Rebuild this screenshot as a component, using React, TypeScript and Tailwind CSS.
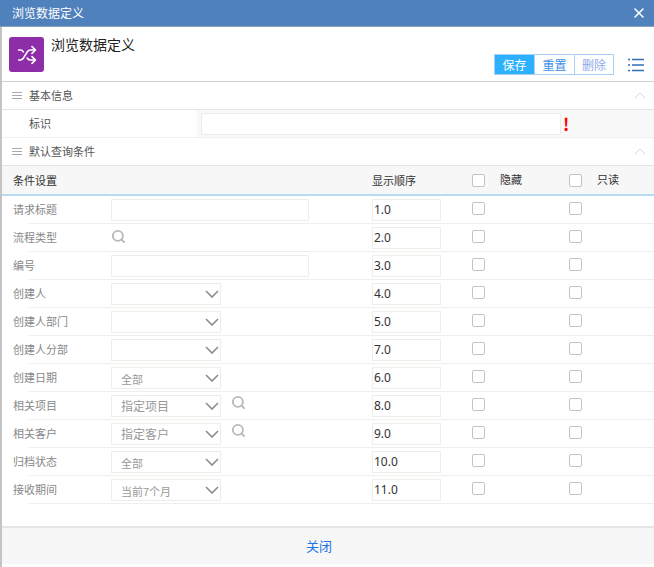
import { Search, Shuffle, X } from 'lucide-react'

type Row = {
  label: string
  order: string
  kind: 'input' | 'search' | 'select'
  value?: string
  lookup?: boolean
}

const ROWS: Row[] = [
  { label: '请求标题', order: '1.0', kind: 'input' },
  { label: '流程类型', order: '2.0', kind: 'search' },
  { label: '编号', order: '3.0', kind: 'input' },
  { label: '创建人', order: '4.0', kind: 'select' },
  { label: '创建人部门', order: '5.0', kind: 'select' },
  { label: '创建人分部', order: '7.0', kind: 'select' },
  { label: '创建日期', order: '6.0', kind: 'select', value: '全部' },
  { label: '相关项目', order: '8.0', kind: 'select', value: '指定项目', lookup: true },
  { label: '相关客户', order: '9.0', kind: 'select', value: '指定客户', lookup: true },
  { label: '归档状态', order: '10.0', kind: 'select', value: '全部' },
  { label: '接收期间', order: '11.0', kind: 'select', value: '当前7个月' },
]

function Lookup() {
  return <Search className="h-[15px] w-[15px] text-[#b8b8b8]" strokeWidth={3} />
}

function Check() {
  return (
    <input
      type="checkbox"
      className="block h-[13px] w-[13px] appearance-none rounded-[2px] border border-[#c4c4c4] bg-white"
    />
  )
}

function SelectBox({ value, lookup }: { value?: string; lookup?: boolean }) {
  return (
    <div className="flex h-[22px] w-[110px] items-center justify-between border border-[#eeeee8] pr-[1px] pl-[9px] text-[#999]">
      <span className={lookup ? 'text-[12px]' : 'pt-[2px]'}>{value}</span>
      <svg width="14" height="8" viewBox="0 0 14 8" fill="none" stroke="#8a8a8a" strokeWidth="1.6">
        <path d="M1 1l6 6 6-6" />
      </svg>
    </div>
  )
}

function SectionBar({ title }: { title: string }) {
  return (
    <div className="flex h-[28px] items-center justify-between border-b border-[#e4e4e4] pr-[8px] pl-[10px] text-[#555]">
      <div className="flex items-center gap-[7px]">
        <div className="flex w-[10px] flex-col gap-[2px]">
          <div className="h-px bg-[#aaa]" />
          <div className="h-px bg-[#aaa]" />
          <div className="h-px bg-[#aaa]" />
        </div>
        <span className="-mt-[1px]">{title}</span>
      </div>
      <svg width="12" height="7" viewBox="0 0 12 7" fill="none" stroke="#d8d8d8" strokeWidth="1">
        <path d="M1 6l5-5 5 5" />
      </svg>
    </div>
  )
}

export default function App() {
  return (
    <div className="flex h-[567px] w-[654px] flex-col bg-white font-['Noto_Sans_CJK_SC','Noto_Sans',sans-serif] text-[11px]">
      <div className="flex h-[27px] shrink-0 items-center justify-between border-b border-[#8da2b8] bg-[#4f81bd] pr-[7px] pl-[12px] text-[12px] text-white">
        <span>浏览数据定义</span>
        <X className="h-[16px] w-[16px]" strokeWidth={2.4} />
      </div>

      <div className="flex min-h-0 flex-1 flex-col border-l-2 border-[#c4c4c4]">
        <div className="flex h-[55px] shrink-0 border-b border-[#d0d0d0] pl-[7px]">
          <div className="mt-[10px] flex h-[35px] w-[35px] items-center justify-center rounded-[3px] bg-[#8e2da8] text-white">
            <Shuffle className="h-[20px] w-[20px]" strokeWidth={2} />
          </div>
          <div className="mt-[7px] ml-[7px] text-[14px] text-[#222]">浏览数据定义</div>
          <div className="mt-[27px] ml-auto flex h-[21px] border border-[#a8d0f5] text-[12px] text-[#3b8fe8]">
            <div className="flex w-[39px] items-center justify-center bg-[#2db1ff] text-white">保存</div>
            <div className="flex w-[40px] items-center justify-center border-l border-[#a8d0f5]">重置</div>
            <div className="flex w-[39px] items-center justify-center border-l border-[#a8d0f5] text-[#8fa9e8]">删除</div>
          </div>
          <svg
            className="mt-[31px] mr-[10px] ml-[14px]"
            width="16"
            height="14"
            viewBox="0 0 16 14"
            fill="none"
            stroke="#2f6fb5"
            strokeWidth="1.6"
          >
            <path d="M0 1.5h2M4 1.5h12M0 7h2M4 7h12M0 12.5h2M4 12.5h12" />
          </svg>
        </div>

        <SectionBar title="基本信息" />
        <div className="flex h-[28px] shrink-0 border-b border-[#f0f0f0]">
          <div className="flex w-[195px] items-center bg-white pb-[1px] pl-[27px] text-[#555]">标识</div>
          <div className="flex flex-1 items-center bg-[#f8f8f8] pl-[4px]">
            <input className="h-[22px] w-[360px] border border-[#eeeee8] bg-white" />
            <span className="ml-[2px] text-[17px] leading-none font-bold text-[#f00]">!</span>
          </div>
        </div>

        <SectionBar title="默认查询条件" />
        <div className="flex h-[30px] shrink-0 items-center border-b-2 border-[#b5dbf5] bg-[#f7f7f7] text-[#333]">
          <div className="w-[370px] pl-[11px]">条件设置</div>
          <div className="w-[100px]">显示顺序</div>
          <div className="flex w-[97px] items-center gap-[15px]">
            <Check />
            <span className="pb-[1px]">隐藏</span>
          </div>
          <div className="flex items-center gap-[15px]">
            <Check />
            <span className="pb-[1px]">只读</span>
          </div>
        </div>

        <div className="flex-1">
          {ROWS.map((row) => (
            <div key={row.label} className="ml-[27px] flex h-[28px] border-b border-[#efefef]">
              <div className="-ml-[16px] flex h-[27px] w-[98px] items-center text-[#888]">{row.label}</div>
              <div className="flex w-[261px] pt-[3px]">
                {row.kind === 'input' ? <input className="h-[22px] w-[198px] border border-[#eeeee8]" /> : null}
                {row.kind === 'search' ? (
                  <div className="pt-[2px]">
                    <Lookup />
                  </div>
                ) : null}
                {row.kind === 'select' ? <SelectBox value={row.value} lookup={row.lookup} /> : null}
                {row.lookup ? (
                  <div className="pl-[10px]">
                    <Lookup />
                  </div>
                ) : null}
              </div>
              <div className="w-[100px] pt-[3px]">
                <input
                  readOnly
                  value={row.order}
                  className="h-[22px] w-[69px] border border-[#eeeee8] pb-[1px] pl-[1px] font-['Noto_Sans',sans-serif] text-[12px] text-[#333]"
                />
              </div>
              <div className="w-[97px] pt-[6px]">
                <Check />
              </div>
              <div className="pt-[6px]">
                <Check />
              </div>
            </div>
          ))}
        </div>

        <div className="flex h-[38px] shrink-0 items-center justify-center border-t-2 border-[#e6e6e6] bg-[#f7f7f7] pr-[18px] text-[13px] text-[#1a73e8]">
          关闭
        </div>
        <div className="h-[3px] shrink-0 bg-white" />
      </div>
    </div>
  )
}
